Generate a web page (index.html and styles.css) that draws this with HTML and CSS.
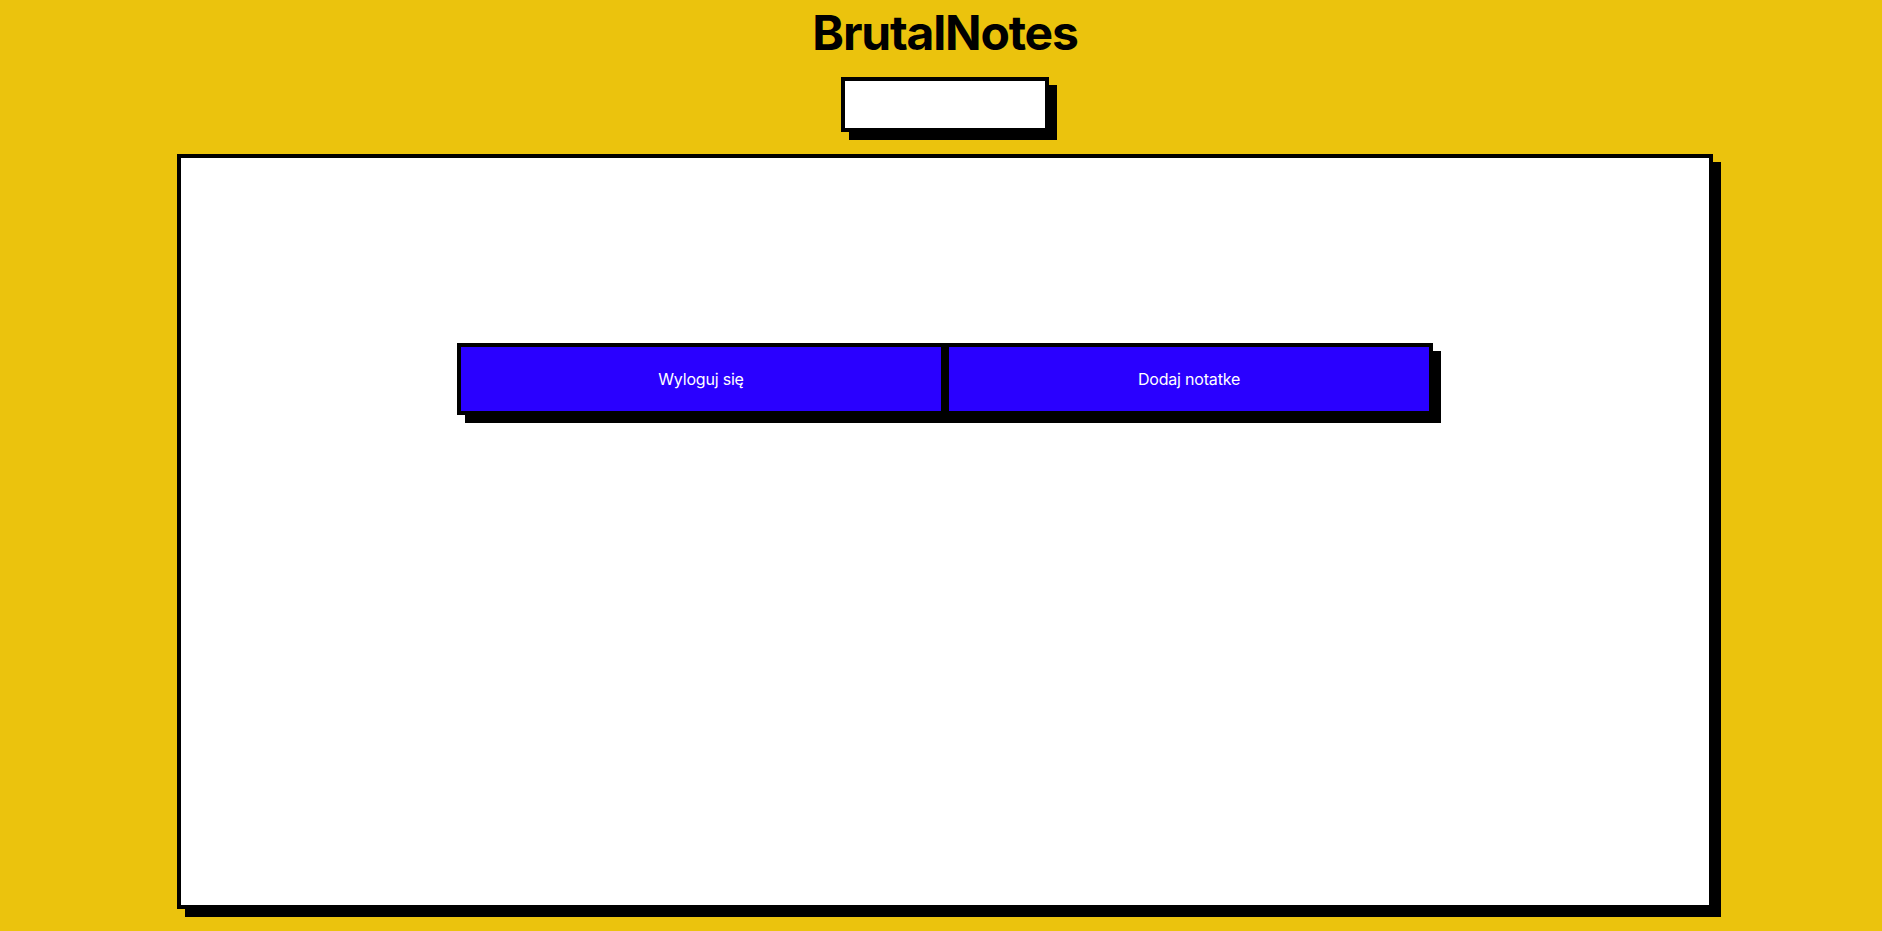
FILE: index.html
```html
<!DOCTYPE html>
<html lang="pl">
<head>
<meta charset="utf-8">
<title>BrutalNotes</title>
<link rel="stylesheet" href="styles.css">
</head>
<body>
<div class="page">
  <h1 class="title">BrutalNotes</h1>
  <input class="search" type="text" aria-label="Szukaj">
  <main class="card">
    <div class="actions">
      <button class="btn" type="button">Wyloguj się</button>
      <button class="btn" type="button">Dodaj notatke</button>
    </div>
  </main>
</div>
</body>
</html>
```

FILE: styles.css
```css
html, body {
  margin: 0;
  padding: 0;
  background: #ebc30d;
  overflow: hidden;
}

.page {
  box-sizing: border-box;
  height: 931px;
  padding: 4px 0 0 8px;
  display: flex;
  flex-direction: column;
  align-items: center;
  font-family: Inter, "Liberation Sans", sans-serif;
}

.title {
  margin: 0;
  font-size: 48px;
  line-height: 58px;
  font-weight: 700;
  color: #000;
  letter-spacing: -1.2px;
}

.search {
  box-sizing: border-box;
  margin: 15px 0 0;
  width: 208px;
  height: 55px;
  border: 4px solid #000;
  background: #fff;
  box-shadow: 8px 8px 0 #000;
  outline: none;
  padding: 0 8px;
  font-family: inherit;
}

.card {
  box-sizing: border-box;
  margin-top: 22px;
  width: 1536px;
  height: 755px;
  background: #fff;
  border: 4px solid #000;
  box-shadow: 8px 8px 0 #000;
  padding-top: 185px;
  display: flex;
  justify-content: center;
  align-items: flex-start;
}

.actions {
  display: flex;
  width: 976px;
}

.btn {
  flex: 1 1 0;
  box-sizing: border-box;
  height: 72px;
  background: #2a00ff;
  color: #fff;
  border: 4px solid #000;
  box-shadow: 8px 8px 0 #000;
  font-family: Inter, "Liberation Sans", sans-serif;
  font-size: 16px;
  letter-spacing: -0.2px;
  cursor: pointer;
  margin: 0;
}
```
